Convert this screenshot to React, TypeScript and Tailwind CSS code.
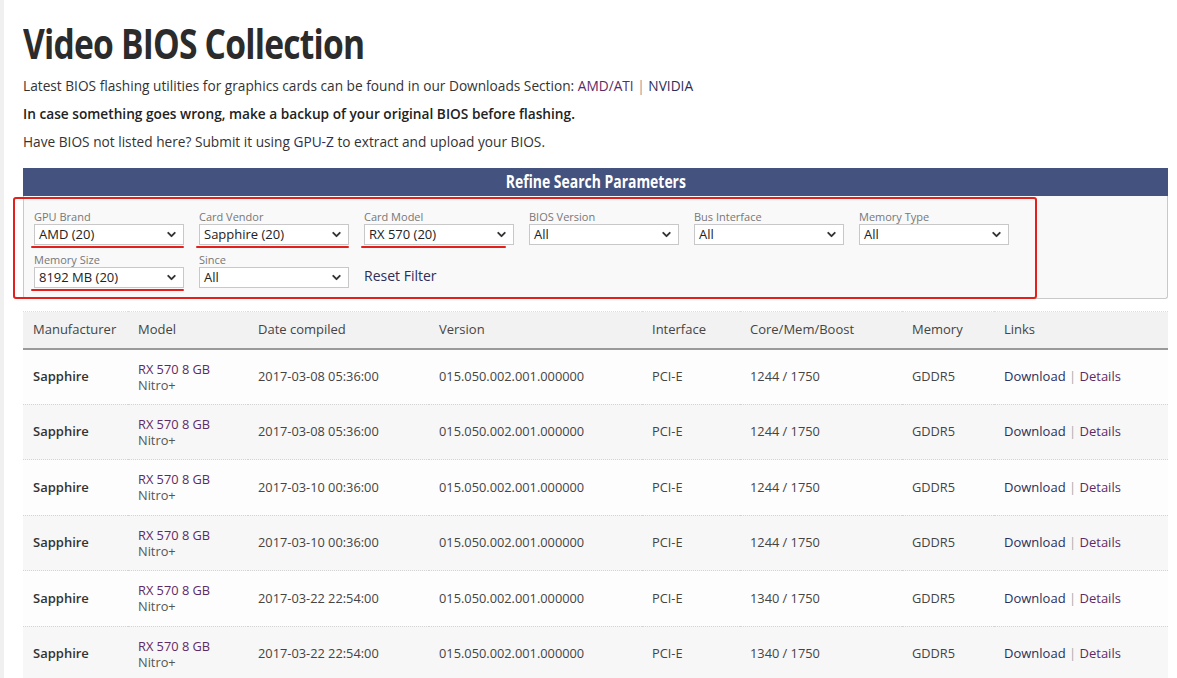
import { ChevronDown } from "lucide-react";

type Row = {
    date: string;
    clocks: string;
};

const rows: Row[] = [
    { date: "2017-03-08 05:36:00", clocks: "1244 / 1750" },
    { date: "2017-03-08 05:36:00", clocks: "1244 / 1750" },
    { date: "2017-03-10 00:36:00", clocks: "1244 / 1750" },
    { date: "2017-03-10 00:36:00", clocks: "1244 / 1750" },
    { date: "2017-03-22 22:54:00", clocks: "1340 / 1750" },
    { date: "2017-03-22 22:54:00", clocks: "1340 / 1750" },
];

function Select({ label, value, marked = false, long = false }: { label: string; value: string; marked?: boolean; long?: boolean }) {
    return (
        <div className="relative w-[150px] mr-[15px] mb-[8px]">
            <div className="text-[11px] leading-[13px] text-[#777] mb-[1px]">{label}</div>
            <div className="flex items-center justify-between h-[21px] bg-white border border-[#c8c8c8] pl-[4px] pr-[5px] text-[13px] text-[#222]">
                <span>{value}</span>
                <ChevronDown size={13} strokeWidth={3.5} className="text-[#333]" />
            </div>
            {marked && (
                <div className={`absolute left-[-3px] bottom-[-3px] h-[2px] bg-[#e3201b] rounded-full ${long ? "w-[145px]" : "w-[153px]"}`} />
            )}
        </div>
    );
}

export default function App() {
    return (
        <div className="min-h-screen bg-white border-l-[4px] border-[#f0f0f0] pl-[19px] pr-[9px] font-['Open_Sans',sans-serif] text-[#333]">
            <h1 className="pt-[18px] h-[76px] text-[42px] leading-[50px] font-bold text-[#2b2b2b] tracking-[-1px] origin-left scale-x-[0.8] whitespace-nowrap">
                Video BIOS Collection
            </h1>
            <div className="text-[13.7px] leading-[20px]">
                <p className="mb-[8px]">
                    Latest BIOS flashing utilities for graphics cards can be found in our Downloads Section:{" "}
                    <a className="text-[#5e2a66]">AMD/ATI</a> <span className="text-[#999]">|</span>{" "}
                    <a className="text-[#2b2e5a]">NVIDIA</a>
                </p>
                <p className="mb-[8px] font-semibold text-[#222]">In case something goes wrong, make a backup of your original BIOS before flashing.</p>
                <p>
                    Have BIOS not listed here? Submit it using <a className="text-[#2b2e5a]">GPU-Z</a> to extract and upload your BIOS.
                </p>
            </div>

            <div className="relative mt-[16px]">
                <div className="h-[28px] bg-[#43527f] text-white text-center text-[17px] leading-[28px] font-bold">
                    <span className="inline-block scale-x-[0.82]">Refine Search Parameters</span>
                </div>
                <div className="h-[103px] bg-[#f9f9f9] border border-t-0 border-[#c9c9c9] rounded-b-[3px] pl-[10px] pt-[14px] flex flex-wrap content-start">
                    <Select label="GPU Brand" value="AMD (20)" marked />
                    <Select label="Card Vendor" value="Sapphire (20)" marked />
                    <Select label="Card Model" value="RX 570 (20)" marked long />
                    <Select label="BIOS Version" value="All" />
                    <Select label="Bus Interface" value="All" />
                    <Select label="Memory Type" value="All" />
                    <Select label="Memory Size" value="8192 MB (20)" marked />
                    <Select label="Since" value="All" />
                    <div className="flex items-end pb-[10px]">
                        <a className="text-[14px] text-[#2b2e5a]">Reset Filter</a>
                    </div>
                </div>
                <div className="absolute left-[-10px] top-[29px] w-[1024px] h-[102px] border-2 border-[#e3201b] rounded-[3px] pointer-events-none" />
            </div>

            <table className="mt-[12px] w-full table-fixed border-collapse text-[12.8px]">
                <colgroup>
                    <col className="w-[105px]" />
                    <col className="w-[120px]" />
                    <col className="w-[181px]" />
                    <col className="w-[213px]" />
                    <col className="w-[98px]" />
                    <col className="w-[162px]" />
                    <col className="w-[92px]" />
                    <col />
                </colgroup>
                <thead>
                    <tr className="h-[37px] bg-[#f2f2f2] border-t border-dotted border-[#ddd] text-left text-[#444] text-[13px]">
                        <th className="font-normal pl-[10px] border-b-2 border-[#9a9a9a]">Manufacturer</th>
                        <th className="font-normal pl-[10px] border-b-2 border-[#9a9a9a]">Model</th>
                        <th className="font-normal pl-[10px] border-b-2 border-[#9a9a9a]">Date compiled</th>
                        <th className="font-normal pl-[10px] border-b-2 border-[#9a9a9a]">Version</th>
                        <th className="font-normal pl-[10px] border-b-2 border-[#9a9a9a]">Interface</th>
                        <th className="font-normal pl-[10px] border-b-2 border-[#9a9a9a]">Core/Mem/Boost</th>
                        <th className="font-normal pl-[10px] border-b-2 border-[#9a9a9a]">Memory</th>
                        <th className="font-normal pl-[10px] border-b-2 border-[#9a9a9a]">Links</th>
                    </tr>
                </thead>
                <tbody>
                    {rows.map((row, i) => (
                        <tr key={i} className={`h-[55.5px] border-b border-dotted border-[#d4d4d4] ${i % 2 === 0 ? "bg-[#fdfdfd]" : "bg-[#f7f7f7]"}`}>
                            <td className="pl-[10px] font-semibold text-[#333] text-[13px]">Sapphire</td>
                            <td className="pl-[10px] leading-[16px]">
                                <a className="block text-[#5e2a66]">RX 570 8 GB</a>
                                <span className="text-[#555]">Nitro+</span>
                            </td>
                            <td className="pl-[10px] text-[#444]">{row.date}</td>
                            <td className="pl-[10px] text-[#444]">015.050.002.001.000000</td>
                            <td className="pl-[10px] text-[#444]">PCI-E</td>
                            <td className="pl-[10px] text-[#444]">{row.clocks}</td>
                            <td className="pl-[10px] text-[#444]">GDDR5</td>
                            <td className="pl-[10px] text-[13px]">
                                <a className="text-[#2b2e5a]">Download</a> <span className="text-[#aaa]">|</span>{" "}
                                <a className="text-[#5e2a66]">Details</a>
                            </td>
                        </tr>
                    ))}
                </tbody>
            </table>
        </div>
    );
}
